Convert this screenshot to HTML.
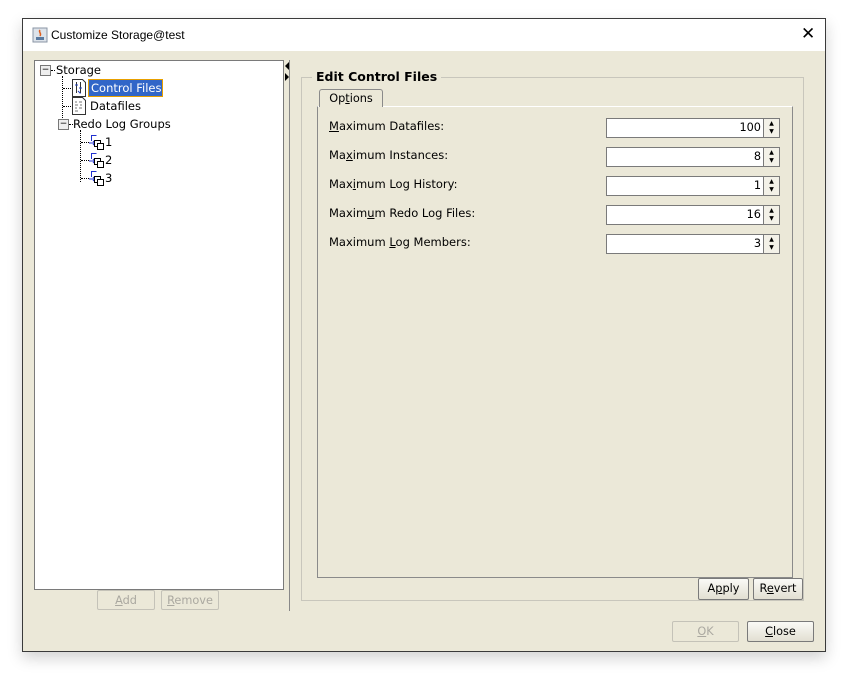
<!DOCTYPE html>
<html><head><style>
*{box-sizing:border-box}
body{margin:0;width:848px;height:678px;background:#fff;position:relative;font-family:"DejaVu Sans","Liberation Sans",sans-serif;font-size:11.5px;color:#000;overflow:hidden}
.a{position:absolute}
.win{left:22px;top:18px;width:804px;height:634px;border:1px solid #3a3a3a;background:#ebe8d8;box-shadow:0 6px 14px rgba(0,0,0,.18)}
.title{left:0;top:0;width:802px;height:32px;background:#fff;font-family:"Liberation Sans","DejaVu Sans",sans-serif;font-size:12px}
.btn{border:1px solid #7a7a7a;border-radius:2px;background:linear-gradient(#fafaf6,#e2dfd2);text-align:center;line-height:19px;font-size:11.3px}
.dis{border-color:#c4c2b8;color:#aaa8a0;background:#ebe8d8}
.fld{background:#fff;border:1px solid #7a7a7a;width:158px;text-align:right;line-height:18px;padding-right:2px;height:20px;font-size:11.3px}
.sp{width:16px;height:20px;border:1px solid #7a7a7a;border-left:none;background:#f3f1e8;font-size:6px;line-height:8px;text-align:center;padding-top:1px}
.lbl{left:329px}
.dot{border-left:1px dotted #000}
.hdot{border-top:1px dotted #000}
</style></head><body>
<div class="a win">
 <div class="a title">
  <svg class="a" style="left:9px;top:8px" width="16" height="16"><rect x="1" y="1" width="14" height="14" fill="#dde3ea" stroke="#8a96a4"/><path d="M8 3c-2 2 2 3 0 6" stroke="#e06020" fill="none" stroke-width="1.5"/><rect x="4" y="10" width="8" height="3" fill="#5a7aa0"/></svg>
  <div class="a" style="left:28px;top:9px">Customize Storage@test</div>
  <div class="a" style="left:778px;top:5px;font-size:17px;font-family:'DejaVu Sans'">✕</div>
 </div>
</div>
<!-- tree -->
<div class="a" style="left:34px;top:60px;width:250px;height:530px;background:#fff;border:1px solid #7a7a7a"></div>
<div class="a" style="left:40px;top:65px;width:11px;height:11px;border:1px solid #777;background:#eee;font-size:9px;line-height:8px;text-align:center">−</div>
<div class="a hdot" style="left:51px;top:70px;width:4px"></div>
<div class="a" style="left:56px;top:63px">Storage</div>
<div class="a dot" style="left:62px;top:76px;height:48px"></div>
<div class="a hdot" style="left:63px;top:88px;width:8px"></div>
<div class="a hdot" style="left:63px;top:106px;width:8px"></div>
<svg class="a" style="left:71px;top:79px" width="16" height="18"><path d="M1.5 .5h10l3 3v14h-13z" fill="#fff" stroke="#333"/><path d="M5.5 3v11M9.5 3v11" stroke="#333"/><path d="M4 6h3M8 9h3M7 12l2.5 2.5" stroke="#2040c0"/></svg>
<div class="a" style="left:88px;top:79px;width:75px;height:18px;background:#3166c8;border:1px solid #e8a000;color:#fff;line-height:16px;padding-left:2px">Control Files</div>
<svg class="a" style="left:71px;top:97px" width="16" height="18"><path d="M1.5 .5h10l3 3v14h-13z" fill="#fff" stroke="#333"/><path d="M4 5h2M8 5h3M4 8h3M9 8h2M4 11h2M8 11h3M4 14h3" stroke="#777"/></svg>
<div class="a" style="left:90px;top:99px">Datafiles</div>
<div class="a" style="left:58px;top:119px;width:11px;height:11px;border:1px solid #777;background:#eee;font-size:9px;line-height:8px;text-align:center">−</div>
<div class="a hdot" style="left:69px;top:124px;width:4px"></div>
<div class="a" style="left:73px;top:117px">Redo Log Groups</div>
<div class="a dot" style="left:80px;top:130px;height:52px"></div>
<div class="a hdot" style="left:81px;top:142px;width:8px"></div>
<div class="a hdot" style="left:81px;top:160px;width:8px"></div>
<div class="a hdot" style="left:81px;top:178px;width:8px"></div>
<svg class="a" style="left:88px;top:134px" width="16" height="16"><path d="M3.5 7V1.5h5M1 9h6M5 7l2 2-2 2" stroke="#2030d0" fill="none"/><rect x="6.5" y="6.5" width="6" height="6" fill="#fff" stroke="#000"/><rect x="9.5" y="9.5" width="6" height="6" fill="#fff" stroke="#000"/></svg>
<svg class="a" style="left:88px;top:152px" width="16" height="16"><path d="M3.5 7V1.5h5M1 9h6M5 7l2 2-2 2" stroke="#2030d0" fill="none"/><rect x="6.5" y="6.5" width="6" height="6" fill="#fff" stroke="#000"/><rect x="9.5" y="9.5" width="6" height="6" fill="#fff" stroke="#000"/></svg>
<svg class="a" style="left:88px;top:170px" width="16" height="16"><path d="M3.5 7V1.5h5M1 9h6M5 7l2 2-2 2" stroke="#2030d0" fill="none"/><rect x="6.5" y="6.5" width="6" height="6" fill="#fff" stroke="#000"/><rect x="9.5" y="9.5" width="6" height="6" fill="#fff" stroke="#000"/></svg>
<div class="a" style="left:105px;top:135px">1</div>
<div class="a" style="left:105px;top:153px">2</div>
<div class="a" style="left:105px;top:171px">3</div>
<div class="a btn dis" style="left:97px;top:590px;width:58px;height:20px"><u>A</u>dd</div>
<div class="a btn dis" style="left:161px;top:590px;width:58px;height:20px"><u>R</u>emove</div>
<!-- divider -->
<div class="a" style="left:289px;top:60px;width:1px;height:551px;background:#888"></div>
<svg class="a" style="left:284px;top:62px" width="6" height="22"><path d="M5 0v8L1 4z M1 11v8l4-4z" fill="#000"/></svg>
<!-- group -->
<div class="a" style="left:301px;top:77px;width:503px;height:524px;border:1px solid #c8c6bc"></div>
<div class="a" style="left:312px;top:69px;background:#ebe8d8;padding:0 4px;font-weight:bold;font-size:12.5px">Edit Control Files</div>
<div class="a" style="left:319px;top:89px;width:64px;height:18px;border:1px solid #8a8a8a;border-bottom:none;border-radius:3px 3px 0 0;background:#ebe8d8;text-align:center;line-height:17px;z-index:2;font-size:11.3px">Op<u>t</u>ions</div>
<div class="a" style="left:317px;top:106px;width:476px;height:472px;border:1px solid #8a8a8a;border-top-color:#fff"></div>
<div class="a lbl" style="top:119px"><u>M</u>aximum Datafiles:</div>
<div class="a lbl" style="top:148px">Ma<u>x</u>imum Instances:</div>
<div class="a lbl" style="top:177px">Max<u>i</u>mum Log History:</div>
<div class="a lbl" style="top:206px">Maxim<u>u</u>m Redo Log Files:</div>
<div class="a lbl" style="top:235px">Maximum <u>L</u>og Members:</div>
<div class="a fld" style="left:606px;top:118px">100</div><div class="a sp" style="left:764px;top:118px">▲<br>▼</div>
<div class="a fld" style="left:606px;top:147px">8</div><div class="a sp" style="left:764px;top:147px">▲<br>▼</div>
<div class="a fld" style="left:606px;top:176px">1</div><div class="a sp" style="left:764px;top:176px">▲<br>▼</div>
<div class="a fld" style="left:606px;top:205px">16</div><div class="a sp" style="left:764px;top:205px">▲<br>▼</div>
<div class="a fld" style="left:606px;top:234px">3</div><div class="a sp" style="left:764px;top:234px">▲<br>▼</div>
<div class="a btn" style="left:698px;top:578px;width:51px;height:22px">A<u>p</u>ply</div>
<div class="a btn" style="left:753px;top:578px;width:50px;height:22px">R<u>e</u>vert</div>
<div class="a btn dis" style="left:672px;top:621px;width:67px;height:21px"><u>O</u>K</div>
<div class="a btn" style="left:747px;top:621px;width:67px;height:21px"><u>C</u>lose</div>
</body></html>
